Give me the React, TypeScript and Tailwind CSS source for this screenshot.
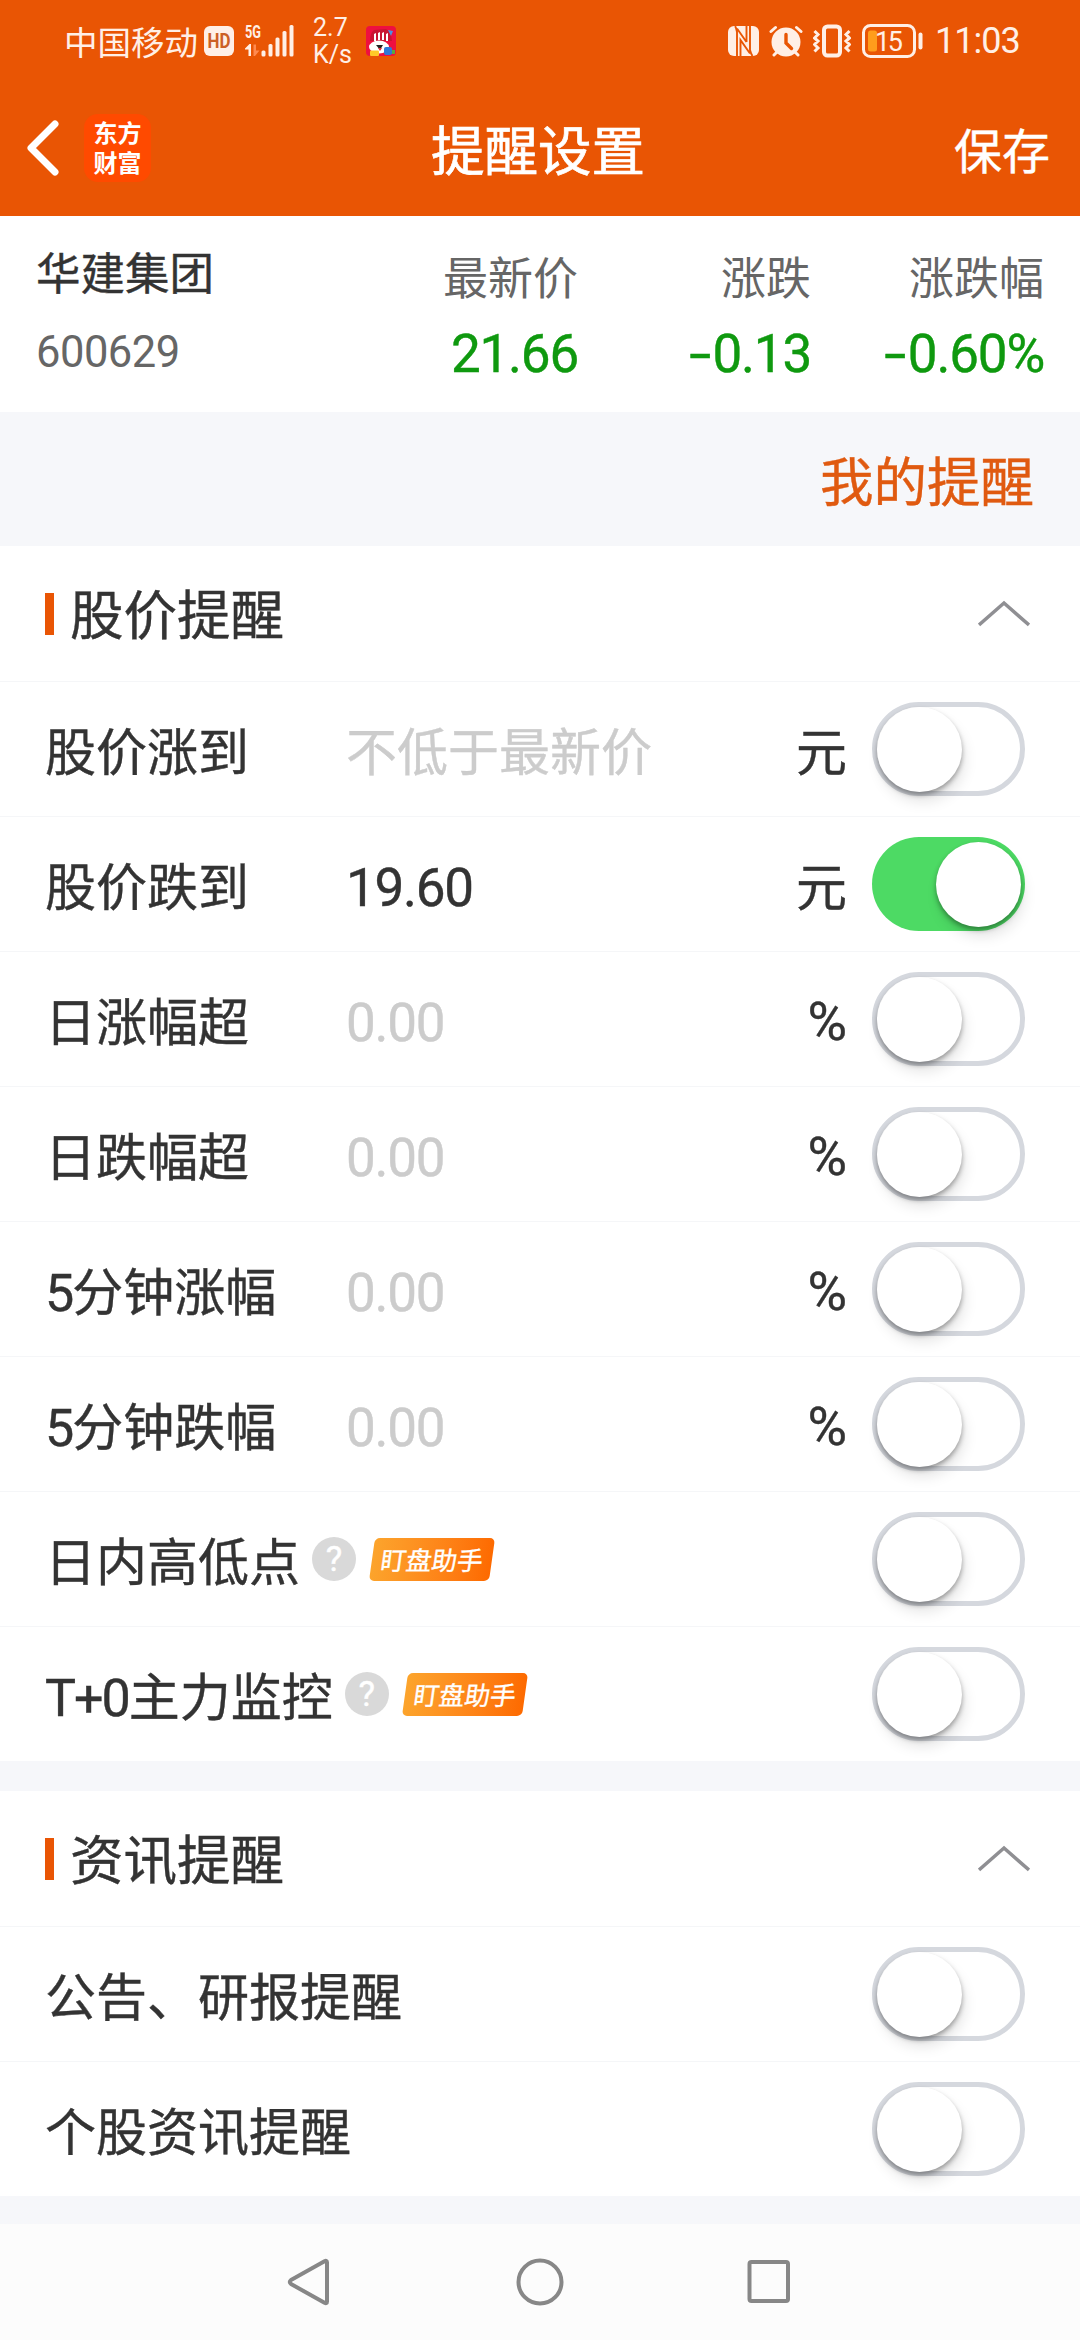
import React from "react";

const CJK = "font-['Noto_Sans_CJK_SC',sans-serif]";
const NUM = "font-[Roboto,'Noto_Sans_CJK_SC',sans-serif]";

function StatusBar() {
  return (
    <div className="flex h-[84px] items-center pr-[62px] pb-[2px] pl-[64px] text-[#ffefe6]">
      <span className="w-[140px] text-[33.5px] leading-[40px] whitespace-nowrap">中国移动</span>
      <svg width="30" height="30" viewBox="0 0 30 30">
        <rect width="30" height="30" rx="6" fill="#ffefe6" />
        <text x="15" y="22" textAnchor="middle" textLength="23" lengthAdjust="spacingAndGlyphs" fontFamily="Roboto" fontWeight="700" fontSize="20" fill="#cc5f25">HD</text>
      </svg>
      <svg className="ml-[10px]" width="52" height="42" viewBox="0 -4 52 42" fill="#ffefe6">
        <text x="1" y="14" textLength="16" lengthAdjust="spacingAndGlyphs" fontFamily="Roboto" fontWeight="700" fontSize="18">5G</text>
        <path d="M1 24.500l4.500-4.500H7v12H4.500v-6.500H1z" />
        <path d="M9.500 20.500H12v6h3.500l-4.500 5.500H9.500z" fill="#ff8a50" />
        <rect x="17.500" y="26.500" width="4" height="6" rx="1.500" />
        <rect x="24.500" y="20" width="4" height="12.500" rx="1.500" />
        <rect x="31.500" y="13.500" width="4" height="19" rx="1.500" />
        <rect x="38.500" y="7" width="4" height="25.500" rx="1.500" />
        <rect x="45.500" y="1" width="4" height="31.500" rx="1.500" />
      </svg>
      <div className="ml-[17px] w-[36px] font-[Roboto] text-[25px] leading-[27px] whitespace-nowrap">
        <div>2.7</div>
        <div>K/s</div>
      </div>
      <svg className="ml-[17px]" width="30" height="30" viewBox="0 0 30 30">
        <rect width="30" height="30" rx="4" fill="#ee1040" />
        <path d="M4 15q0-8 4-11l12-1q5 2 6 12z" fill="#c81432" />
        <path d="M8 8l2-1v8H8zM12 7l2-1v8h-2zM16 7l2-1v8h-2zM20 8l2-1v8h-2z" fill="#fff" />
        <path d="M22 4l5 1-2 5z" fill="#4a90e2" />
        <ellipse cx="13" cy="21" rx="10" ry="6.500" fill="#fff" />
        <path d="M10 19h7l-3 5z" fill="#222" />
        <path d="M12 22h4l-2 3z" fill="#e8303c" />
        <rect x="4" y="24.500" width="9" height="5.500" rx="1" fill="#ffc928" />
        <rect x="18" y="21" width="8" height="8" rx="2" fill="#2f78d8" />
        <rect x="26" y="24" width="3" height="4" fill="#5aa83c" />
      </svg>
      <div className="flex-1" />
      <svg width="31" height="30" viewBox="0 0 31 30">
        <rect width="31" height="30" rx="6" fill="#ffefe6" />
        <path d="M9 30V6Q8 1 7 0M12.500 30V14l9.500 13.500M9 2.500L18.500 16M22 0v24q1 4 2.500 6M18.500 0v16" fill="none" stroke="#e95504" strokeWidth="1.900" />
      </svg>
      <svg className="ml-[10px]" width="34" height="32" viewBox="0 0 34 32">
        <circle cx="17" cy="17" r="14.500" fill="#ffefe6" />
        <path d="M2 6.500L6.500 2.500M32 6.500L27.500 2.500M5 30l3-3M29 30l-3-3" stroke="#ffefe6" strokeWidth="3" strokeLinecap="round" />
        <path d="M17 9.500V18l5.500 5.500" stroke="#e95504" strokeWidth="3.400" fill="none" strokeLinecap="round" />
      </svg>
      <svg className="ml-[10px]" width="38" height="34" viewBox="0 0 38 34" fill="none" stroke="#ffefe6">
        <rect x="11" y="2.500" width="16" height="29" rx="3.500" strokeWidth="4" />
        <path d="M1.500 7l3.500 3.500-3.500 3.500L5 17l-3.500 3.500L5 24l-3.500 3.500M36.500 7L33 10.500l3.500 3.500L33 17l3.500 3.500L33 24l3.500 3.500" strokeWidth="3" />
      </svg>
      <svg className="ml-[11px]" width="61" height="34" viewBox="0 0 61 34">
        <rect x="1.500" y="1.500" width="51" height="31" rx="7" fill="none" stroke="#ffefe6" strokeWidth="3" />
        <rect x="6" y="6.500" width="9" height="21" rx="2.500" fill="#ff9d1c" />
        <rect x="56.500" y="8.500" width="4" height="17" rx="2" fill="#ffefe6" />
        <text x="27" y="26.500" textAnchor="middle" fontFamily="Roboto" fontSize="27" textLength="28" fill="#ffefe6">15</text>
      </svg>
      <span className="ml-[12px] w-[83px] font-[Roboto] text-[36px] leading-[40px] tracking-[-1px] whitespace-nowrap">11:03</span>
    </div>
  );
}

function TitleBar() {
  return (
    <div className="grid h-[132px] grid-cols-[1fr_auto_1fr] items-center pr-[30px] pb-[4px] pl-[26px] text-white">
      <div className="flex items-center">
        <svg width="34" height="56" viewBox="0 0 34 56" fill="none" stroke="#fff" strokeWidth="7" strokeLinecap="round" strokeLinejoin="round">
          <path d="M29 4L5 28l24 24" />
        </svg>
        <div className="ml-[24px] flex h-[68px] w-[67px] flex-col items-center justify-center rounded-[14px] bg-[#ff4a00] pb-[2px] text-[24px] leading-[30px] font-bold">
          <span>东方</span>
          <span>财富</span>
        </div>
      </div>
      <h1 className="text-[53.500px] leading-[72px] [-webkit-text-stroke:0.7px]">提醒设置</h1>
      <button className="justify-self-end text-[48px] leading-[64px] [-webkit-text-stroke:0.4px]">保存</button>
    </div>
  );
}

function Quote({ label, value, className }: { label: string; value: string; className: string }) {
  const negative = value.startsWith("-");
  return (
    <div className={"flex flex-col items-end " + className}>
      <span className="text-[45px] leading-[60px] text-[#666]">{label}</span>
      <span className={"mt-[16px] text-[53px] leading-[64px] tracking-[-1.2px] whitespace-nowrap text-[#0f990f] [-webkit-text-stroke:0.4px] " + NUM}>
        {negative && <span className="mr-[3px] inline-block origin-right scale-x-150">-</span>}
        {negative ? value.slice(1) : value}
      </span>
    </div>
  );
}

function Toggle({ on }: { on?: boolean }) {
  return (
    <button
      role="switch"
      aria-checked={!!on}
      className={
        "flex h-[94px] w-[153px] shrink-0 items-center rounded-full " +
        (on ? "justify-end bg-[#4dda64] px-[4px]" : "border-[5px] border-[#d5d8de] bg-white")
      }
    >
      <span className="size-[85px] shrink-0 rounded-full bg-white shadow-[0_3px_5px_rgba(0,0,0,0.35),3px_10px_14px_rgba(0,0,0,0.1)]" />
    </button>
  );
}

function Help() {
  return (
    <span className="ml-[12px] flex size-[44px] items-center justify-center rounded-full bg-[#d9d9d9] font-[Roboto] text-[35px] leading-none text-white">?</span>
  );
}

function Badge() {
  return (
    <span className="ml-[16px] flex h-[43px] w-[120px] -skew-x-[8deg] items-center justify-center rounded-[5px] bg-linear-to-r from-[#fca42c] to-[#fd6a00] pb-[2px] text-[25.500px] leading-none whitespace-nowrap text-white [-webkit-text-stroke:0.4px]">
      盯盘助手
    </span>
  );
}

type RowProps = { label: string; value?: string; placeholder?: string; unit?: string; on?: boolean; helper?: boolean };

function Row({ label, value, placeholder, unit, on, helper }: RowProps) {
  const text = value ?? placeholder ?? "";
  return (
    <div className="flex h-[135px] items-center border-t border-[#f5f6f8] pr-[55px] pl-[45px] text-[51px] text-[#333] [-webkit-text-stroke:0.4px]">
      <div className={"flex items-center whitespace-nowrap " + (helper ? "" : unit ? "w-[301px]" : "")}>
        <span className="leading-[68px]">
          {label.split(/([0-9T+]+)/).map((part, i) =>
            /^[0-9T+]+$/.test(part) ? <span key={i} className={"text-[52px] leading-none tracking-[-2px] " + NUM}>{part}</span> : part
          )}
        </span>
        {helper && <Help />}
        {helper && <Badge />}
      </div>
      <span className={"flex-1 leading-[68px] " + (value ? "text-[#333] " : "text-[#ccc] ") + (/[0-9]/.test(text) ? "pt-[7px] text-[53px] tracking-[-1.3px] " + NUM : "")}>
        {text}
      </span>
      {unit && <span className={"mr-[25px] leading-[68px] " + (unit === "%" ? "pt-[6px] text-[54px] " + NUM : "")}>{unit}</span>}
      <Toggle on={on} />
    </div>
  );
}

function Section({ title, rows }: { title: string; rows: RowProps[] }) {
  return (
    <section className="bg-white">
      <div className="flex h-[135px] items-center pr-[50px] pl-[45px]">
        <span className="h-[42px] w-[9px] bg-[#e95504]" />
        <h2 className="ml-[16px] flex-1 pb-[4px] text-[53.500px] leading-[72px] text-[#333] [-webkit-text-stroke:0.4px]">{title}</h2>
        <svg width="52" height="27" viewBox="0 0 52 27" fill="none" stroke="#8f8f93" strokeWidth="3.500">
          <path d="M1 25L26 3l25 22" />
        </svg>
      </div>
      {rows.map((r) => (
        <Row key={r.label} {...r} />
      ))}
    </section>
  );
}

const priceRows: RowProps[] = [
  { label: "股价涨到", placeholder: "不低于最新价", unit: "元" },
  { label: "股价跌到", value: "19.60", unit: "元", on: true },
  { label: "日涨幅超", placeholder: "0.00", unit: "%" },
  { label: "日跌幅超", placeholder: "0.00", unit: "%" },
  { label: "5分钟涨幅", placeholder: "0.00", unit: "%" },
  { label: "5分钟跌幅", placeholder: "0.00", unit: "%" },
  { label: "日内高低点", helper: true },
  { label: "T+0主力监控", helper: true },
];

const newsRows: RowProps[] = [{ label: "公告、研报提醒" }, { label: "个股资讯提醒" }];

export default function App() {
  return (
    <div lang="zh-CN" className={"flex h-[2340px] w-[1080px] flex-col overflow-hidden bg-[#f6f7fa] " + CJK}>
      <header className="h-[216px] bg-[#e95504]">
        <StatusBar />
        <TitleBar />
      </header>
      <div className="flex h-[196px] bg-white pl-[36px]">
        <div className="flex flex-1 flex-col pt-[25px]">
          <span className="text-[44.500px] leading-[60px] text-[#333] [-webkit-text-stroke:0.4px]">华建集团</span>
          <span className={"mt-[22px] text-[43.500px] leading-[60px] tracking-[-0.5px] text-[#666] " + NUM}>600629</span>
        </div>
        <Quote className="pt-[30px]" label="最新价" value="21.66" />
        <Quote className="w-[233px] pt-[30px]" label="涨跌" value="-0.13" />
        <Quote className="w-[233px] pt-[30px]" label="涨跌幅" value="-0.60%" />
        <div className="w-[36px]" />
      </div>
      <div className="flex h-[134px] items-center justify-end pr-[46px] text-[53.500px] leading-[72px] text-[#e05a10] [-webkit-text-stroke:0.4px]">我的提醒</div>
      <Section title="股价提醒" rows={priceRows} />
      <div className="h-[30px]" />
      <Section title="资讯提醒" rows={newsRows} />
      <div className="h-[28px]" />
      <nav className="flex flex-1 items-start bg-[#fcfcfc] pt-[34px] pl-[287px]">
        <svg width="503" height="48" viewBox="0 0 503 48" fill="none" stroke="#878787" strokeWidth="4">
          <path d="M40 4.500v39q0 2.500-2.500 1.300L4 26q-2.500-2 0-4L37.500 3.200Q40 2 40 4.500z" strokeLinejoin="round" />
          <circle cx="253" cy="24" r="21.500" />
          <rect x="462.500" y="4" width="38.500" height="39" rx="2" />
        </svg>
      </nav>
    </div>
  );
}
